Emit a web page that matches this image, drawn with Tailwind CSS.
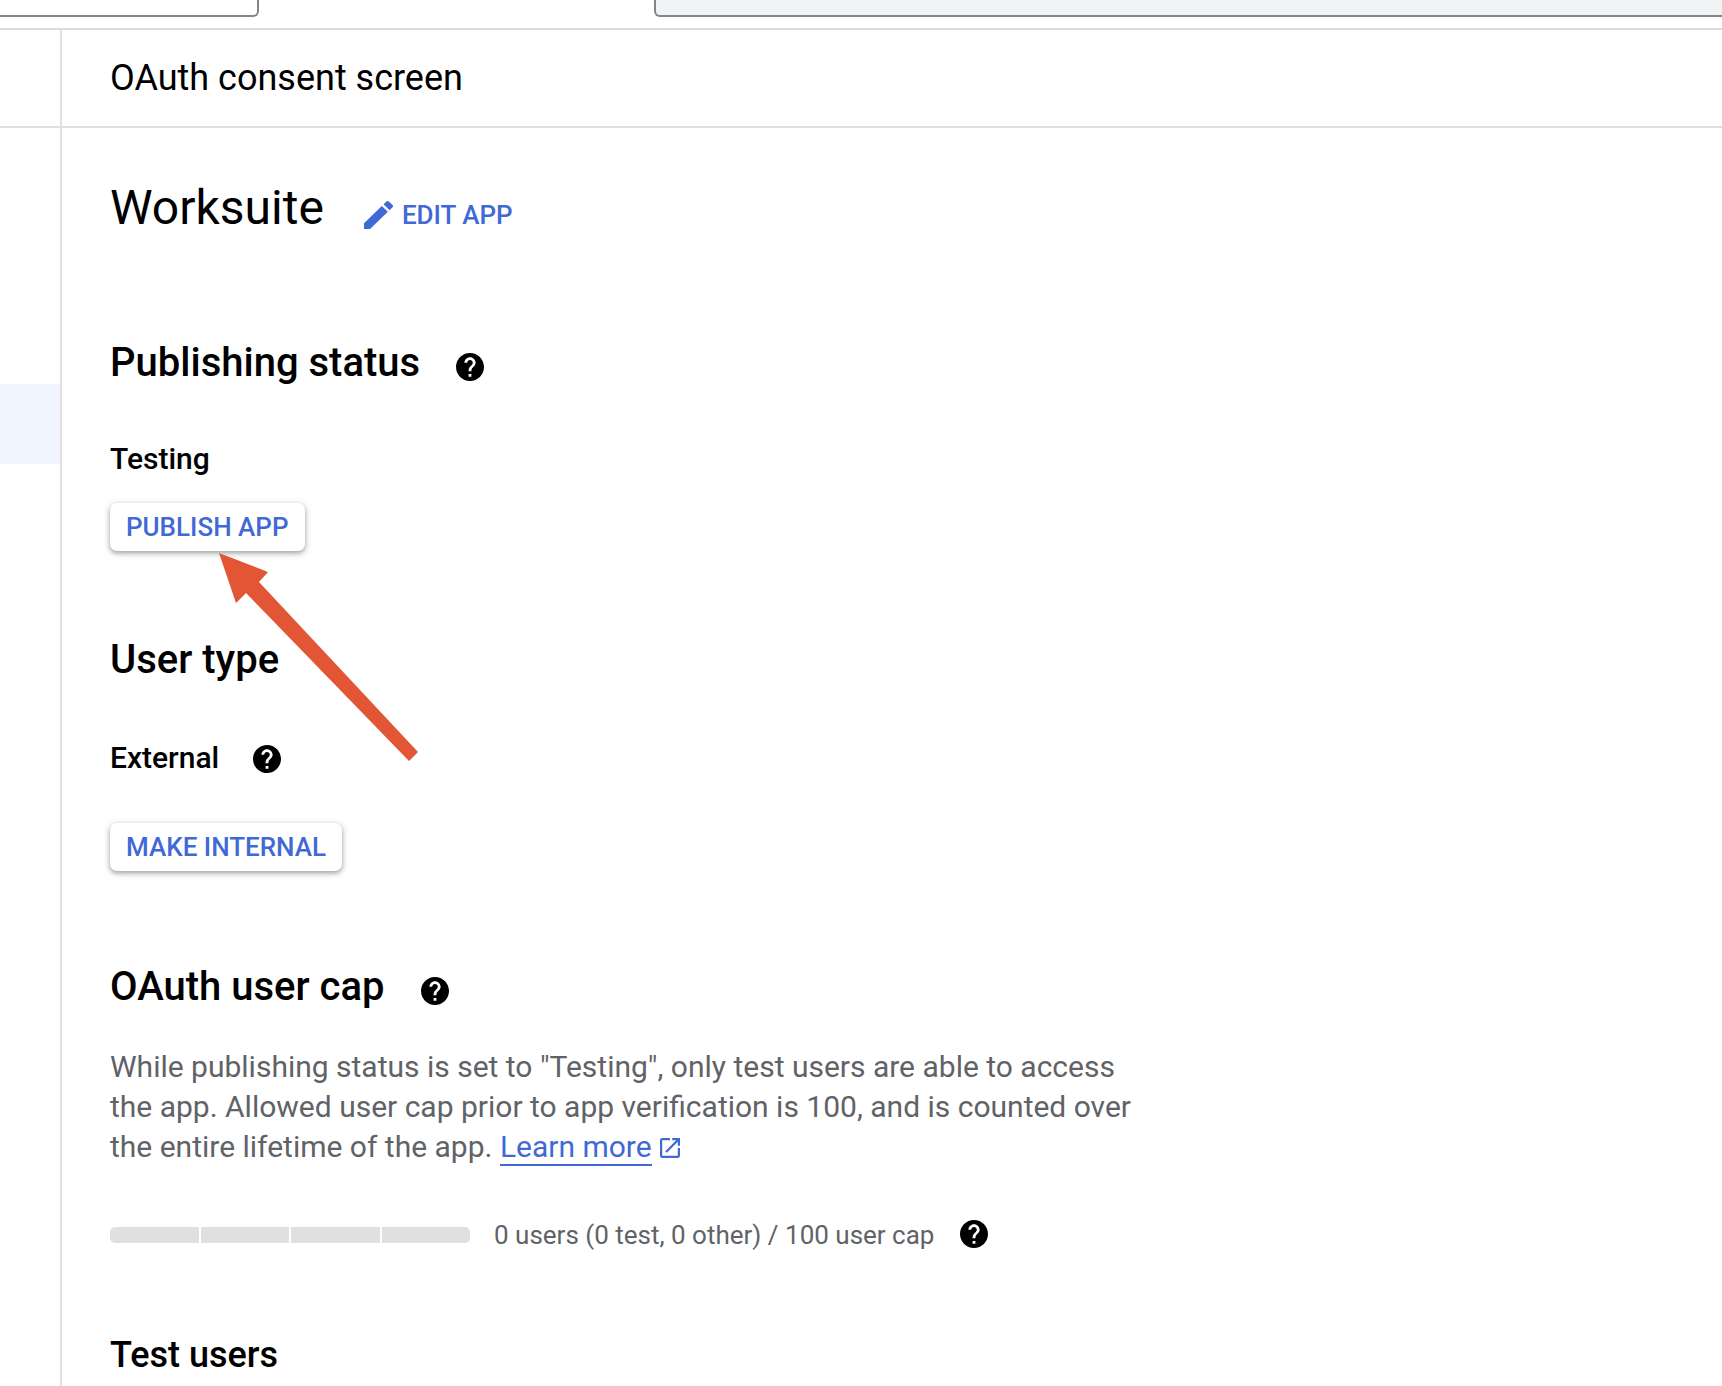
<!DOCTYPE html>
<html lang="en">

<head>
    <meta charset="UTF-8">
    <meta name="viewport" content="width=device-width, initial-scale=1.0">
    <title>OAuth consent screen</title>
    <script src="https://cdn.jsdelivr.net/npm/@tailwindcss/browser@4"></script>
</head>

<body class="relative h-screen overflow-hidden bg-white font-['Roboto',sans-serif] text-black">
    <!-- top strip -->
    <div class="flex h-[30px] items-start justify-between border-b-2 border-[#dadce0]">
        <div class="h-[17px] w-[259px] rounded-br-[6px] border-r-2 border-b-2 border-[#80868b]"></div>
        <div class="h-[17px] w-[1068px] rounded-bl-[6px] border-l-2 border-b-2 border-[#80868b] bg-[#f1f3f4]"></div>
    </div>

    <div class="flex">
        <!-- left rail -->
        <div class="h-[1356px] w-[62px] shrink-0 border-r-2 border-[#e0e0e0]">
            <div class="h-[98px] border-b-2 border-[#e0e0e0]"></div>
            <div class="mt-[256px] h-[80px] bg-[#f0f5ff]"></div>
        </div>

        <div class="min-w-0 flex-1">
            <div class="flex h-[98px] items-center border-b-2 border-[#e0e0e0] pl-[48px] text-[36px]">OAuth consent screen</div>

            <div class="pl-[48px]">
                <div class="mt-[50px] flex h-[60px] items-center">
                    <h1 class="text-[48px] font-normal">Worksuite</h1>
                    <svg class="ml-[40px] mt-[14px] h-[28px] w-[29px]" viewBox="3 3 18 18" preserveAspectRatio="none" fill="#4169d6"><path d="M3 17.25V21h3.75L17.81 9.94l-3.75-3.75L3 17.25zM20.71 7.04c.39-.39.39-1.02 0-1.41l-2.34-2.34c-.39-.39-1.02-.39-1.41 0l-1.83 1.83 3.75 3.75 1.83-1.83z"/></svg>
                    <span class="ml-[9px] mt-[14px] text-[26px] font-medium text-[#4169d6]">EDIT APP</span>
                </div>

                <div class="mt-[103px] flex h-[44px] items-center">
                    <h2 class="text-[40px] font-medium">Publishing status</h2>
                    <svg class="ml-[36px] mt-[8px] size-[28px]" viewBox="2 2 20 20" fill="#000"><path d="M12 2C6.48 2 2 6.48 2 12s4.48 10 10 10 10-4.48 10-10S17.52 2 12 2zm1 17h-2v-2h2v2zm2.07-7.75l-.9.92C13.45 12.9 13 13.5 13 15h-2v-.5c0-1.1.45-2.1 1.17-2.83l1.24-1.26c.37-.36.59-.86.59-1.41 0-1.1-.9-2-2-2s-2 .9-2 2H8c0-2.21 1.79-4 4-4s4 1.79 4 4c0 .88-.36 1.68-.93 2.25z"/></svg>
                </div>

                <div class="mt-[57px] flex h-[32px] items-center text-[30px] font-medium">Testing</div>
                <button class="mt-[29px] block h-[48px] rounded-[7px] bg-white px-[16px] pt-[1px] text-[26px] font-medium text-[#4169d6] shadow-[0_2px_4px_rgba(60,64,67,0.4),0_2px_6px_2px_rgba(60,64,67,0.12)]">PUBLISH APP</button>

                <h2 class="mt-[87px] flex h-[44px] items-center text-[40px] font-medium">User type</h2>

                <div class="mt-[59px] flex h-[32px] items-center text-[30px] font-medium">
                    External
                    <svg class="ml-[34px] mt-[4px] size-[28px]" viewBox="2 2 20 20" fill="#000"><path d="M12 2C6.48 2 2 6.48 2 12s4.48 10 10 10 10-4.48 10-10S17.52 2 12 2zm1 17h-2v-2h2v2zm2.07-7.75l-.9.92C13.45 12.9 13 13.5 13 15h-2v-.5c0-1.1.45-2.1 1.17-2.83l1.24-1.26c.37-.36.59-.86.59-1.41 0-1.1-.9-2-2-2s-2 .9-2 2H8c0-2.21 1.79-4 4-4s4 1.79 4 4c0 .88-.36 1.68-.93 2.25z"/></svg>
                </div>
                <button class="mt-[50px] block h-[48px] rounded-[7px] bg-white px-[16px] pt-[1px] text-[26px] font-medium text-[#4169d6] shadow-[0_2px_4px_rgba(60,64,67,0.4),0_2px_6px_2px_rgba(60,64,67,0.12)]">MAKE INTERNAL</button>

                <div class="mt-[94px] flex h-[44px] items-center">
                    <h2 class="text-[40px] font-medium">OAuth user cap</h2>
                    <svg class="ml-[37px] mt-[8px] size-[28px]" viewBox="2 2 20 20" fill="#000"><path d="M12 2C6.48 2 2 6.48 2 12s4.48 10 10 10 10-4.48 10-10S17.52 2 12 2zm1 17h-2v-2h2v2zm2.07-7.75l-.9.92C13.45 12.9 13 13.5 13 15h-2v-.5c0-1.1.45-2.1 1.17-2.83l1.24-1.26c.37-.36.59-.86.59-1.41 0-1.1-.9-2-2-2s-2 .9-2 2H8c0-2.21 1.79-4 4-4s4 1.79 4 4c0 .88-.36 1.68-.93 2.25z"/></svg>
                </div>

                <p class="mt-[38px] w-[1100px] text-[30px] leading-[40px] text-[#5f6368]">
                    While publishing status is set to "Testing", only test users are able to access<br>
                    the app. Allowed user cap prior to app verification is 100, and is counted over<br>
                    the entire lifetime of the app.
                    <a href="#" class="border-b-2 border-[#4169d6] text-[#4169d6]">Learn more</a><svg class="ml-[8px] inline-block size-[20px] align-[-1px]" viewBox="3 3 18 18" fill="#4169d6"><path d="M19 19H5V5h7V3H5c-1.11 0-2 .9-2 2v14c0 1.1.89 2 2 2h14c1.1 0 2-.9 2-2v-7h-2v7zM14 3v2h3.59l-9.83 9.83 1.41 1.41L19 6.41V10h2V3h-7z"/></svg>
                </p>

                <div class="mt-[52px] flex h-[32px] items-center">
                    <div class="flex h-[16px] w-[360px] gap-[2px] overflow-hidden rounded-[5px]">
                        <div class="flex-1 bg-[#e0e0e0]"></div>
                        <div class="flex-1 bg-[#e0e0e0]"></div>
                        <div class="flex-1 bg-[#e0e0e0]"></div>
                        <div class="flex-1 bg-[#e0e0e0]"></div>
                    </div>
                    <span class="ml-[24px] mt-[1px] text-[26px] text-[#5f6368]">0 users (0 test, 0 other) / 100 user cap</span>
                    <svg class="ml-[26px] mb-[2px] size-[28px]" viewBox="2 2 20 20" fill="#000"><path d="M12 2C6.48 2 2 6.48 2 12s4.48 10 10 10 10-4.48 10-10S17.52 2 12 2zm1 17h-2v-2h2v2zm2.07-7.75l-.9.92C13.45 12.9 13 13.5 13 15h-2v-.5c0-1.1.45-2.1 1.17-2.83l1.24-1.26c.37-.36.59-.86.59-1.41 0-1.1-.9-2-2-2s-2 .9-2 2H8c0-2.21 1.79-4 4-4s4 1.79 4 4c0 .88-.36 1.68-.93 2.25z"/></svg>
                </div>

                <h2 class="mt-[82px] flex h-[44px] items-center text-[36px] font-medium">Test users</h2>
            </div>
        </div>
    </div>

    <!-- annotation arrow drawn over the page -->
    <svg class="absolute top-0 left-0 h-[1386px] w-[1722px]" viewBox="0 0 1722 1386" fill="#e25535">
        <polygon points="219,553 268,572 259,582 418,752 409,761 246,593 236,603" />
    </svg>
</body>

</html>
